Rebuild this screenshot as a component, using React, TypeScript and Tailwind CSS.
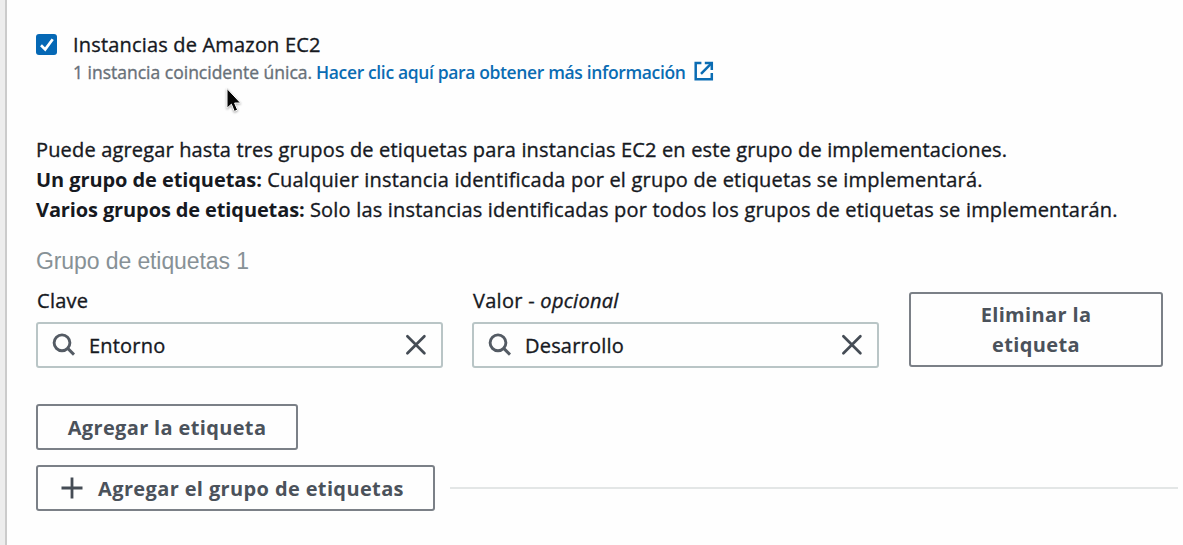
import type { ReactNode } from "react";

function SearchIcon() {
  return (
    <svg className="h-6 w-6 shrink-0" viewBox="0 0 24 24" fill="none" stroke="#545b64" strokeWidth="2.9">
      <circle cx="10" cy="9.8" r="7.9" />
      <path d="M15.7 15.4 22 21.6" />
    </svg>
  );
}

function CloseIcon() {
  return (
    <svg className="h-[22px] w-[22px] shrink-0" viewBox="0 0 22 22" fill="none" stroke="#454c55" strokeWidth="2.7" strokeLinecap="round">
      <path d="M2.4 2.2 19.4 19.2M19.4 2.2 2.4 19.2" />
    </svg>
  );
}

function ExternalIcon() {
  return (
    <svg className="-mt-[2px] h-5 w-5 shrink-0" viewBox="0 0 20 20" fill="none" stroke="#0a6cb3" strokeWidth="2.5">
      <path d="M7.4 2H1.7v16.2H17.8V12" />
      <path d="M10.8 2H17.8v7" />
      <path d="M17.6 2.2 7 12.8" />
    </svg>
  );
}

function Pointer() {
  return (
    <svg className="absolute left-[222px] top-[86px] h-[30px] w-[22px] drop-shadow-[0_1px_1px_rgba(0,0,0,0.35)]" viewBox="0 0 22 30">
      <path d="M5 2.5V22.2L9.4 18.2 12.3 25.4 15.6 24 12.6 17H18.6Z" fill="#050505" stroke="#fff" strokeWidth="1" />
    </svg>
  );
}

function Field({ label, value }: { label: ReactNode; value: string }) {
  return (
    <div className="flex w-[407px] flex-col">
      <label className="h-[30px] pl-px leading-[18px] tracking-[0.28px]">{label}</label>
      <div className="flex h-[46px] items-center rounded-[3px] border-2 border-[#b9c5c6] pl-[14px] pr-[14px]">
        <SearchIcon />
        <span className="ml-[13px] mt-px flex-1 tracking-[0.2px]">{value}</span>
        <CloseIcon />
      </div>
    </div>
  );
}

function Button({ className, children }: { className: string; children: ReactNode }) {
  return (
    <button
      className={`flex items-center justify-center rounded-[3px] border-2 border-[#7b8087] font-bold leading-[30px] tracking-[0.35px] text-[#4b525b] [-webkit-text-stroke:0px] ${className}`}
    >
      {children}
    </button>
  );
}

export default function App() {
  return (
    <div className="relative flex h-[545px] w-full overflow-hidden bg-[#fefefe] font-['Open_Sans','Noto_Sans',sans-serif] text-[20px] text-[#16191f] [-webkit-text-stroke:0.35px]">
      <div className="w-[7px] shrink-0 border-r-2 border-[#cbcbcb] bg-[#ededed]" />
      <main className="flex flex-1 flex-col pl-[29px]">
        <div className="flex pt-[33px]">
          <div className="mt-px flex h-[21px] w-[21px] items-center justify-center rounded-[3px] bg-[#0568b5]">
            <svg className="h-4 w-4" viewBox="0 0 16 16" fill="none" stroke="#fff" strokeWidth="2.7">
              <path d="M2 8.3 6.2 12.4 13.7 2.2" />
            </svg>
          </div>
          <div className="ml-[16px]">
            <div className="leading-[24px] tracking-[0.18px]">Instancias de Amazon EC2</div>
            <div className="mt-[3px] flex items-center text-[17.5px] leading-[24px]">
              <span className="w-[243px] whitespace-nowrap text-[#687078]">1 instancia coincidente única.</span>
              <a className="flex items-center whitespace-nowrap font-semibold tracking-[-0.36px] text-[#0a6cb3] [-webkit-text-stroke:0px]">
                <span className="w-[378px]">Hacer clic aquí para obtener más información</span>
                <ExternalIcon />
              </a>
            </div>
          </div>
        </div>
        <div className="mt-[51px] whitespace-nowrap leading-[30px] tracking-[0.16px]">
          <p>
            Puede agregar hasta tres grupos de etiquetas para instancias EC2 en este grupo de implementaciones.
          </p>
          <p className="tracking-[0.195px]">
            <b className="tracking-[-0.08px] [-webkit-text-stroke:0px]">Un grupo de etiquetas:</b> Cualquier instancia identificada por el grupo de etiquetas se implementará.
          </p>
          <p className="tracking-[0.195px]">
            <b className="tracking-[-0.12px] [-webkit-text-stroke:0px]">Varios grupos de etiquetas:</b> Solo las instancias identificadas por todos los grupos de etiquetas se implementarán.
          </p>
        </div>
        <h3 className="mt-[21px] font-['Liberation_Sans',sans-serif] text-[23px] font-normal leading-[30px] tracking-[-0.1px] text-[#879196] [-webkit-text-stroke:0px]">
          Grupo de etiquetas 1
        </h3>
        <div className="mt-[16px] flex">
          <Field label="Clave" value="Entorno" />
          <div className="ml-[29px]">
            <Field
              label={
                <>
                  Valor - <i>opcional</i>
                </>
              }
              value="Desarrollo"
            />
          </div>
          <Button className="ml-[30px] h-[75px] w-[254px] px-[60px]">Eliminar la etiqueta</Button>
        </div>
        <Button className="mt-[36px] h-[46px] w-[262px] pt-[2px]">Agregar la etiqueta</Button>
        <div className="mt-[15px] flex items-center">
          <Button className="h-[46px] w-[399px]">
            <svg className="-ml-[6px] mr-[15px] h-[22px] w-[22px]" viewBox="0 0 22 22" fill="none" stroke="#454c55" strokeWidth="2.8">
              <path d="M11 0.5v21M0.5 11h21" />
            </svg>
            <span className="mt-[2px] tracking-[0.37px]">Agregar el grupo de etiquetas</span>
          </Button>
          <hr className="ml-[15px] mr-[5px] flex-1 border-0 border-t-2 border-[#e3e6e6]" />
        </div>
      </main>
      <Pointer />
    </div>
  );
}
